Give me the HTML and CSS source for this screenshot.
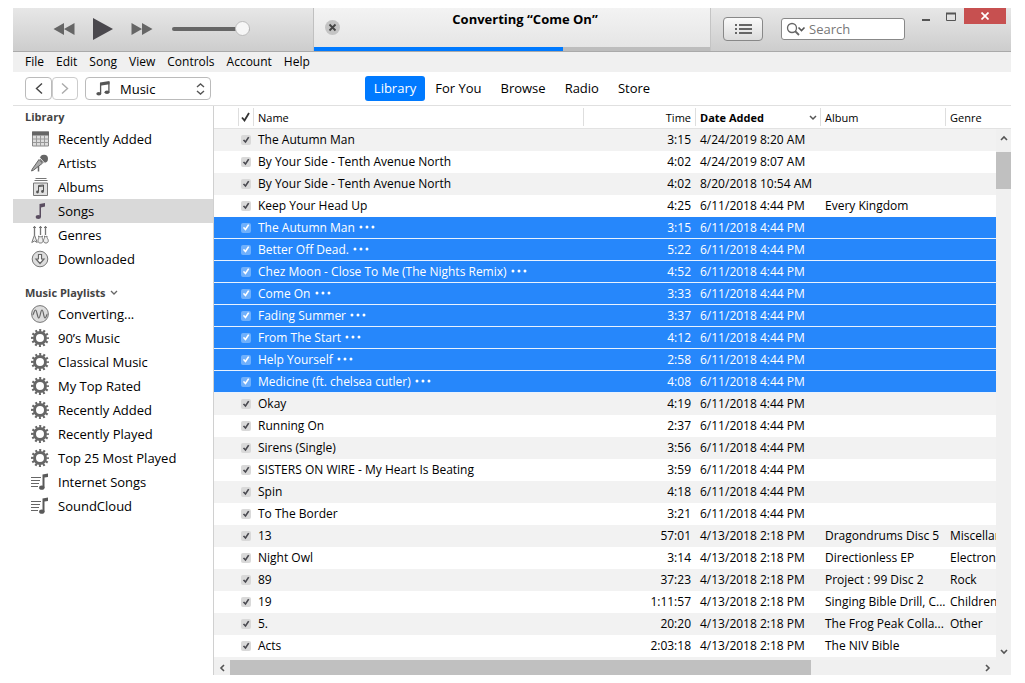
FILE: index.html
```html
<!DOCTYPE html>
<html lang="en">
<head>
<meta charset="utf-8">
<title>Music Library</title>
<link rel="stylesheet" href="styles.css">
</head>
<body>
<svg class="defs" aria-hidden="true">
  <symbol id="gear" viewBox="0 0 18 18">
    <circle cx="9" cy="9" r="5.500" fill="none" stroke="#666" stroke-width="3"/>
    <circle cx="9" cy="9" r="7.700" fill="none" stroke="#666" stroke-width="2.500" stroke-dasharray="2 2.030" stroke-dashoffset="1"/>
  </symbol>
  <symbol id="playlist" viewBox="0 0 18 18">
    <path d="M0 4.500h10M0 7.500h9M0 10.500h8M0 13.500h7" stroke="#666" fill="none"/>
    <path d="M11.500 1.500L17 0.500v3.500l-3.500 0.500V15h-2z" fill="#5a5a5a"/>
    <ellipse cx="10.800" cy="14.700" rx="2.700" ry="2.100" fill="#5a5a5a"/>
  </symbol>
  <symbol id="dots" viewBox="0 0 16 4">
    <circle cx="2" cy="2" r="1.500" fill="#fff"/><circle cx="8" cy="2" r="1.500" fill="#fff"/><circle cx="14" cy="2" r="1.500" fill="#fff"/>
  </symbol>
</svg>
<div class="app">
  <header class="toolbar">
    <div class="player">
      <button class="plain" aria-label="Previous"><svg width="22" height="14"><path d="M11 1v12L0.500 7zM21.500 1v12L11 7z" fill="#666"/></svg></button>
      <button class="plain" aria-label="Play"><svg width="20" height="22"><path d="M0 0l20 11L0 22z" fill="#4a484d"/></svg></button>
      <button class="plain" aria-label="Next"><svg width="22" height="14"><path d="M0.500 1v12L11 7zM11 1v12l10.500-6z" fill="#666"/></svg></button>
      <input class="volume" type="range" min="0" max="100" value="100" aria-label="Volume">
    </div>
    <div class="status">
      <button class="stop" aria-label="Stop converting"><svg width="15" height="15"><circle cx="7.500" cy="7.500" r="7.500" fill="#c4c4c4"/><path d="M4.500 4.500l6 6m0-6l-6 6" stroke="#444" stroke-width="1.800"/></svg></button>
      <div class="status-title">Converting “Come On”</div>
      <div class="progress"><div class="progress-fill" style="width:63%"></div></div>
    </div>
    <div class="tools">
      <button class="list-button" aria-label="Up next"><svg width="18" height="12"><path d="M1 2h2M1 6h2M1 10h2M5 2h13M5 6h13M5 10h13" stroke="#666" stroke-width="2"/></svg></button>
      <label class="search"><svg width="20" height="14"><circle cx="6" cy="6" r="4.500" fill="none" stroke="#666" stroke-width="1.300"/><path d="M9 9l4 4" stroke="#666" stroke-width="1.800"/><path d="M12.500 5.500l3 3 3-3" fill="none" stroke="#555" stroke-width="1.600"/></svg><input type="text" placeholder="Search" aria-label="Search"></label>
      <div class="window-buttons">
        <button class="plain" aria-label="Minimize"><svg width="8" height="11"><path d="M0 9h8" stroke="#555" stroke-width="2"/></svg></button>
        <button class="plain" aria-label="Maximize"><svg width="10" height="11"><path d="M0.500 2v7.500h9V2" fill="none" stroke="#555"/><path d="M0 2.500h10" stroke="#555" stroke-width="2"/></svg></button>
        <button class="close" aria-label="Close"><svg width="8" height="8"><path d="M0.500 0.500l7 7m0-7l-7 7" stroke="#fff" stroke-width="1.700"/></svg></button>
      </div>
    </div>
  </header>
  <nav class="menu" aria-label="Menu">
    <button>File</button><button>Edit</button><button>Song</button><button>View</button><button>Controls</button><button>Account</button><button>Help</button>
  </nav>
  <div class="navbar">
    <div class="nav-left">
      <div class="history">
        <button aria-label="Back"><svg width="8" height="11"><path d="M7 0.500l-5.500 5 5.500 5" fill="none" stroke="#444" stroke-width="1.400"/></svg></button>
        <button aria-label="Forward"><svg width="8" height="11"><path d="M1 0.500l5.500 5-5.500 5" fill="none" stroke="#aaa" stroke-width="1.400"/></svg></button>
      </div>
      <div class="source">
        <svg width="14" height="15"><path d="M4 1.500L13.500 0v3.200L4 4.700z" fill="#555"/><path d="M4.600 2v10.500M12.900 1v10" stroke="#555" stroke-width="1.300"/><ellipse cx="2.800" cy="12.700" rx="2.500" ry="1.800" fill="#555"/><ellipse cx="11" cy="11.200" rx="2.500" ry="1.800" fill="#555"/></svg>
        <select aria-label="Media type"><option>Music</option></select>
        <svg class="updown" width="9" height="12"><path d="M1 4l3.500-3L8 4M1 8l3.500 3L8 8" fill="none" stroke="#555" stroke-width="1.400"/></svg>
      </div>
    </div>
    <nav class="tabs" aria-label="Sections">
      <a class="active" href="#">Library</a><a href="#">For You</a><a href="#">Browse</a><a href="#">Radio</a><a href="#">Store</a>
    </nav>
    <div></div>
  </div>
  <div class="main">
    <aside class="sidebar">
      <h2>Library</h2>
      <ul>
        <li><a href="#"><svg width="18" height="18"><path d="M1.500 2h16v14h-16z" fill="#ddd" stroke="#888"/><path d="M1 1.500h17v4H1z" fill="#666"/><path d="M5.500 5v11M9.500 5v11M13.500 5v11M2 9h16M2 12.500h16" stroke="#999"/></svg>Recently Added</a></li>
        <li><a href="#"><svg width="18" height="18"><circle cx="13" cy="4.700" r="4" fill="#666"/><path d="M8.500 3.500l5.500 6" stroke="#eee"/><path d="M8 5.500l3.500 3.700-9 7L0.500 17l0.800-2z" fill="#aaa" stroke="#666"/><path d="M7.500 12v5.500" stroke="#666" stroke-width="1.500"/></svg>Artists</a></li>
        <li><a href="#"><svg width="18" height="18"><path d="M4.500 0.500h11M3.500 2.500h13" stroke="#777"/><path d="M2.500 5h14v12.500h-14z" fill="#e0e0e0" stroke="#777"/><path d="M7.500 13.500v-6l5-0.500v6M7.500 8.500l5-0.500" fill="none" stroke="#555"/><circle cx="6.500" cy="14" r="1.400" fill="#555"/><circle cx="11.500" cy="13.500" r="1.400" fill="#555"/></svg>Albums</a></li>
        <li class="current"><a href="#"><svg width="18" height="18"><path d="M8.500 2l5.500-1v3.500l-4 1V15H8.500z" fill="#5a4d60"/><ellipse cx="7.300" cy="14.900" rx="2.700" ry="2" fill="#5a4d60"/></svg>Songs</a></li>
        <li><a href="#"><svg width="18" height="18"><path d="M3.500 0v9M9.500 0v9M14.500 0v9" stroke="#777" stroke-width="1.300"/><path d="M2 1.500h3M8 1.500h3M13 1.500h3" stroke="#777"/><path d="M3.500 9L0.800 16.500l2.700-1.500 2.700 1.500zM7.500 10c1.500 1 2.500 1 4 0-1 2 .5 3 .5 4.500 0 2-1 2.500-2.500 2.500S7 16.500 7 14.500c0-1.500 1.500-2.500.5-4.500zM13.500 10c1 .8 1.500.8 2.500 0-.5 2 1.300 3 1.300 4.500 0 2-1 2.500-2.300 2.500s-2.500-.5-2.500-2.500c0-1.500 1.500-2.500 1-4.500z" fill="#eee" stroke="#777"/></svg>Genres</a></li>
        <li><a href="#"><svg width="18" height="18"><circle cx="9" cy="9" r="7.800" fill="#ddd" stroke="#777"/><path d="M7.500 4.500h3V9H13l-4 4.500L5 9h2.500z" fill="#fff" stroke="#666" stroke-width="1.200"/></svg>Downloaded</a></li>
      </ul>
      <h2 class="second">Music Playlists <svg width="8" height="6"><path d="M1 1l3 3 3-3" fill="none" stroke="#666" stroke-width="1.300"/></svg></h2>
      <ul>
        <li><a href="#"><svg width="18" height="18"><circle cx="9" cy="9" r="8.400" fill="#ddd" stroke="#777"/><path d="M1.500 10c1.200 0 1.500-5 3-5s1.800 8 3.300 8S9.500 5 11 5s1.600 8 3 8 1.500-4 2.500-4" fill="none" stroke="#666" stroke-width="1.200"/></svg>Converting...</a></li>
        <li><a href="#"><svg width="18" height="18"><use href="#gear"/></svg>90’s Music</a></li>
        <li><a href="#"><svg width="18" height="18"><use href="#gear"/></svg>Classical Music</a></li>
        <li><a href="#"><svg width="18" height="18"><use href="#gear"/></svg>My Top Rated</a></li>
        <li><a href="#"><svg width="18" height="18"><use href="#gear"/></svg>Recently Added</a></li>
        <li><a href="#"><svg width="18" height="18"><use href="#gear"/></svg>Recently Played</a></li>
        <li><a href="#"><svg width="18" height="18"><use href="#gear"/></svg>Top 25 Most Played</a></li>
        <li><a href="#"><svg width="18" height="18"><use href="#playlist"/></svg>Internet Songs</a></li>
        <li><a href="#"><svg width="18" height="18"><use href="#playlist"/></svg>SoundCloud</a></li>
      </ul>
    </aside>
    <section class="content">
      <table class="songs">
        <colgroup><col class="c-gap"><col class="c-check"><col><col class="c-time"><col class="c-wide"><col class="c-wide"><col class="c-genre"></colgroup>
        <thead><tr><th></th><th class="check"><svg width="9" height="10"><path d="M1 5.500l2.500 3L8 1" fill="none" stroke="#333" stroke-width="1.800"/></svg></th><th>Name</th><th class="time">Time</th><th class="sorted"><span>Date Added<svg width="8" height="6"><path d="M1 1l3 3 3-3" fill="none" stroke="#555" stroke-width="1.500"/></svg></span></th><th>Album</th><th>Genre</th></tr></thead>
        <tbody>
          <tr><td></td><td class="check"><input type="checkbox" checked aria-label="The Autumn Man"></td><td>The Autumn Man</td><td class="time">3:15</td><td>4/24/2019 8:20 AM</td><td></td><td></td></tr>
          <tr><td></td><td class="check"><input type="checkbox" checked aria-label="By Your Side"></td><td>By Your Side - Tenth Avenue North</td><td class="time">4:02</td><td>4/24/2019 8:07 AM</td><td></td><td></td></tr>
          <tr><td></td><td class="check"><input type="checkbox" checked aria-label="By Your Side"></td><td>By Your Side - Tenth Avenue North</td><td class="time">4:02</td><td>8/20/2018 10:54 AM</td><td></td><td></td></tr>
          <tr><td></td><td class="check"><input type="checkbox" checked aria-label="Keep Your Head Up"></td><td>Keep Your Head Up</td><td class="time">4:25</td><td>6/11/2018 4:44 PM</td><td>Every Kingdom</td><td></td></tr>
          <tr class="selected"><td></td><td class="check"><input type="checkbox" checked aria-label="The Autumn Man"></td><td>The Autumn Man <svg class="more"><use href="#dots"/></svg></td><td class="time">3:15</td><td>6/11/2018 4:44 PM</td><td></td><td></td></tr>
          <tr class="selected"><td></td><td class="check"><input type="checkbox" checked aria-label="Better Off Dead."></td><td>Better Off Dead. <svg class="more"><use href="#dots"/></svg></td><td class="time">5:22</td><td>6/11/2018 4:44 PM</td><td></td><td></td></tr>
          <tr class="selected"><td></td><td class="check"><input type="checkbox" checked aria-label="Chez Moon"></td><td>Chez Moon - Close To Me (The Nights Remix) <svg class="more"><use href="#dots"/></svg></td><td class="time">4:52</td><td>6/11/2018 4:44 PM</td><td></td><td></td></tr>
          <tr class="selected"><td></td><td class="check"><input type="checkbox" checked aria-label="Come On"></td><td>Come On <svg class="more"><use href="#dots"/></svg></td><td class="time">3:33</td><td>6/11/2018 4:44 PM</td><td></td><td></td></tr>
          <tr class="selected"><td></td><td class="check"><input type="checkbox" checked aria-label="Fading Summer"></td><td>Fading Summer <svg class="more"><use href="#dots"/></svg></td><td class="time">3:37</td><td>6/11/2018 4:44 PM</td><td></td><td></td></tr>
          <tr class="selected"><td></td><td class="check"><input type="checkbox" checked aria-label="From The Start"></td><td>From The Start <svg class="more"><use href="#dots"/></svg></td><td class="time">4:12</td><td>6/11/2018 4:44 PM</td><td></td><td></td></tr>
          <tr class="selected"><td></td><td class="check"><input type="checkbox" checked aria-label="Help Yourself"></td><td>Help Yourself <svg class="more"><use href="#dots"/></svg></td><td class="time">2:58</td><td>6/11/2018 4:44 PM</td><td></td><td></td></tr>
          <tr class="selected"><td></td><td class="check"><input type="checkbox" checked aria-label="Medicine"></td><td>Medicine (ft. chelsea cutler) <svg class="more"><use href="#dots"/></svg></td><td class="time">4:08</td><td>6/11/2018 4:44 PM</td><td></td><td></td></tr>
          <tr><td></td><td class="check"><input type="checkbox" checked aria-label="Okay"></td><td>Okay</td><td class="time">4:19</td><td>6/11/2018 4:44 PM</td><td></td><td></td></tr>
          <tr><td></td><td class="check"><input type="checkbox" checked aria-label="Running On"></td><td>Running On</td><td class="time">2:37</td><td>6/11/2018 4:44 PM</td><td></td><td></td></tr>
          <tr><td></td><td class="check"><input type="checkbox" checked aria-label="Sirens"></td><td>Sirens (Single)</td><td class="time">3:56</td><td>6/11/2018 4:44 PM</td><td></td><td></td></tr>
          <tr><td></td><td class="check"><input type="checkbox" checked aria-label="My Heart Is Beating"></td><td>SISTERS ON WIRE - My Heart Is Beating</td><td class="time">3:59</td><td>6/11/2018 4:44 PM</td><td></td><td></td></tr>
          <tr><td></td><td class="check"><input type="checkbox" checked aria-label="Spin"></td><td>Spin</td><td class="time">4:18</td><td>6/11/2018 4:44 PM</td><td></td><td></td></tr>
          <tr><td></td><td class="check"><input type="checkbox" checked aria-label="To The Border"></td><td>To The Border</td><td class="time">3:21</td><td>6/11/2018 4:44 PM</td><td></td><td></td></tr>
          <tr><td></td><td class="check"><input type="checkbox" checked aria-label="13"></td><td>13</td><td class="time">57:01</td><td>4/13/2018 2:18 PM</td><td>Dragondrums Disc 5</td><td>Miscellaneous</td></tr>
          <tr><td></td><td class="check"><input type="checkbox" checked aria-label="Night Owl"></td><td>Night Owl</td><td class="time">3:14</td><td>4/13/2018 2:18 PM</td><td>Directionless EP</td><td>Electronic</td></tr>
          <tr><td></td><td class="check"><input type="checkbox" checked aria-label="89"></td><td>89</td><td class="time">37:23</td><td>4/13/2018 2:18 PM</td><td>Project : 99 Disc 2</td><td>Rock</td></tr>
          <tr><td></td><td class="check"><input type="checkbox" checked aria-label="19"></td><td>19</td><td class="time">1:11:57</td><td>4/13/2018 2:18 PM</td><td>Singing Bible Drill, C...</td><td>Children</td></tr>
          <tr><td></td><td class="check"><input type="checkbox" checked aria-label="5."></td><td>5.</td><td class="time">20:20</td><td>4/13/2018 2:18 PM</td><td>The Frog Peak Colla...</td><td>Other</td></tr>
          <tr><td></td><td class="check"><input type="checkbox" checked aria-label="Acts"></td><td>Acts</td><td class="time">2:03:18</td><td>4/13/2018 2:18 PM</td><td>The NIV Bible</td><td></td></tr>
        </tbody>
      </table>
      <div class="vscroll">
        <button aria-label="Scroll up"><svg width="8" height="6"><path d="M1 5l3-3 3 3" fill="none" stroke="#555" stroke-width="1.600"/></svg></button>
        <div class="vthumb"></div>
        <button aria-label="Scroll down"><svg width="8" height="6"><path d="M1 1l3 3 3-3" fill="none" stroke="#555" stroke-width="1.600"/></svg></button>
      </div>
      <div class="hscroll">
        <button aria-label="Scroll left"><svg width="6" height="8"><path d="M5 1L2 4l3 3" fill="none" stroke="#555" stroke-width="1.600"/></svg></button>
        <div class="htrack"><div class="hthumb" style="width:77.5%"></div></div>
        <button aria-label="Scroll right"><svg width="6" height="8"><path d="M1 1l3 3-3 3" fill="none" stroke="#555" stroke-width="1.600"/></svg></button>
      </div>
    </section>
  </div>
</div>
</body>
</html>
```
FILE: styles.css
```css
* { box-sizing: border-box; }
body {
  margin: 0;
  padding: 8px 14px 8px 13px;
  background: #fff;
  color: #000;
  font: 12px/16px "Segoe UI", "Open Sans", "Noto Sans", sans-serif;
}
button, input, select { font: inherit; color: inherit; margin: 0; padding: 0; border: 0; background: none; }
button { display: flex; align-items: center; justify-content: center; }
svg { display: block; flex: none; }
a { color: inherit; text-decoration: none; }
.defs { position: absolute; width: 0; height: 0; }

.toolbar {
  display: grid;
  grid-template-columns: 1fr 396px 1fr;
  height: 44px;
  border-bottom: 1px solid #aaa;
  background: linear-gradient(#e7e7e7, #cdcdcd);
}
.player { display: flex; align-items: center; padding: 0 0 1px 40px; gap: 18px; }
.volume { appearance: none; width: 78px; height: 16px; margin-left: 1px; }
.volume::-webkit-slider-runnable-track { height: 4px; border-radius: 2px; background: #666; }
.volume::-webkit-slider-thumb {
  appearance: none;
  width: 15px;
  height: 15px;
  margin-top: -6px;
  border: 1px solid #bbb;
  border-radius: 50%;
  background: #f6f6f6;
}
.status {
  display: grid;
  grid-template-columns: 36px 1fr 10px;
  grid-template-rows: 1fr 4px;
  background: linear-gradient(#f3f3f3, #e4e4e4);
  box-shadow: -1px 0 #c0c0c0, 1px 0 #c4c4c4;
}
.stop { justify-self: center; }
.status-title { padding-top: 3px; font-size: 13px; font-weight: bold; text-align: center; }
.progress { grid-column: 1 / -1; background: #bdbdbd; }
.progress-fill { height: 100%; background: #007aff; }
.tools { display: flex; padding: 0 5px 0 13px; }
.list-button {
  width: 40px;
  height: 24px;
  margin-top: 9px;
  border: 1px solid #888;
  border-radius: 4px;
  background: linear-gradient(#fafafa, #dcdcdc);
}
.search {
  display: flex;
  align-items: center;
  gap: 3px;
  width: 124px;
  height: 22px;
  margin: 10px 0 0 18px;
  padding-left: 4px;
  border: 1px solid #888;
  border-radius: 3px;
  background: #fff;
}
.search input { flex: 1; min-width: 0; height: 18px; font-size: 13px; outline: 0; }
.search input::placeholder { color: #777; opacity: 1; }
.window-buttons { display: flex; gap: 9px; height: 16px; margin-left: auto; }
.window-buttons .plain { width: 16px; }
.window-buttons .close { width: 42px; margin-left: -4px; }
.close { background: #c75050; }

.menu { display: flex; align-items: center; gap: 12px; height: 20px; padding-left: 12px; background: #f0f0f0; }

.navbar {
  display: grid;
  grid-template-columns: 1fr auto 1fr;
  align-items: center;
  height: 34px;
  padding: 0 12px;
  border-bottom: 1px solid #e0e0e0;
}
.nav-left { display: flex; gap: 7px; }
.history { display: flex; }
.history button { width: 27px; height: 23px; border: 1px solid #bbb; border-radius: 4px; }
.history button + button { width: 26px; border-color: #ccc; }
.source {
  display: flex;
  align-items: center;
  gap: 10px;
  width: 126px;
  height: 23px;
  padding: 0 5px 0 10px;
  border: 1px solid #bbb;
  border-radius: 4px;
}
.source select { flex: 1; appearance: none; font-size: 13px; }
.tabs { display: flex; gap: 1px; font-size: 13px; }
.tabs a { padding: 4px 9px 5px; border-radius: 3px; }
.tabs .active { background: #007aff; color: #fff; }

.main { display: grid; grid-template-columns: 201px 1fr; }
.sidebar { border-right: 1px solid #d0d0d0; font-size: 13px; }
.sidebar h2 {
  display: flex;
  align-items: center;
  gap: 4px;
  height: 21px;
  margin: 0;
  padding-left: 12px;
  color: #444;
  font-size: 11px;
}
.sidebar .second { height: 19px; margin-top: 12px; }
.sidebar ul { margin: 0; padding: 0; list-style: none; }
.sidebar li a { display: flex; align-items: center; gap: 9px; height: 24px; padding-left: 18px; }
.sidebar .current { background: #d9d9d9; }

.content { position: relative; min-width: 0; background: #f2f2f2; }
.songs { width: 100%; border-spacing: 0; table-layout: fixed; background: #fff; }
.c-gap { width: 25px; }
.c-check { width: 15px; }
.c-time { width: 112px; }
.c-wide { width: 125px; }
.c-genre { width: 65px; }
.songs th {
  height: 23px;
  padding: 1px 4px 0;
  border-bottom: 1px solid #e2e2e2;
  background: linear-gradient(#dedede, #dedede) right 2px / 1px 18px no-repeat;
  font-size: 11px;
  font-weight: normal;
  text-align: left;
}
.songs th:last-child { background: none; }
.songs .sorted { font-weight: bold; }
.sorted span { display: flex; align-items: center; justify-content: space-between; }
.songs td { height: 22px; padding: 0 0 0 4px; white-space: nowrap; overflow: hidden; }
.songs .time { padding-right: 5px; text-align: right; }
.songs .check { padding: 0 2px; }
.songs tbody tr:nth-child(odd) { background: #f2f2f2; }
.songs tbody tr.selected { background: #2687fb; color: #fff; }
.selected td { border-bottom: 1px solid #e8f2ff; }
.more { display: inline-block; width: 16px; height: 4px; margin-left: 1px; vertical-align: 3px; }
.check input {
  appearance: none;
  display: block;
  width: 10px;
  height: 10px;
  border-radius: 2px;
  background: #d9d9d9;
}
.check input::after {
  content: "";
  display: block;
  width: 10px;
  height: 10px;
  background: #4a4a50;
  clip-path: polygon(18% 52%, 32% 44%, 43% 58%, 70% 18%, 84% 26%, 46% 82%);
}
.selected .check input { background: #6fb0fc; }
.selected .check input::after { background: #fff; }

.vscroll {
  position: absolute;
  top: 23px;
  right: 0;
  bottom: 15px;
  display: grid;
  grid-template-rows: 23px 1fr 16px;
  width: 15px;
  background: #f0f0f0;
}
.vthumb { height: 37px; background: #c0c0c0; }
.vscroll button:first-child { height: 17px; }
.hscroll { display: grid; grid-template-columns: 16px 1fr 16px; height: 15px; margin-top: 3px; padding-right: 15px; background: #f0f0f0; }
.hthumb { height: 15px; background: #c0c0c0; }
```
